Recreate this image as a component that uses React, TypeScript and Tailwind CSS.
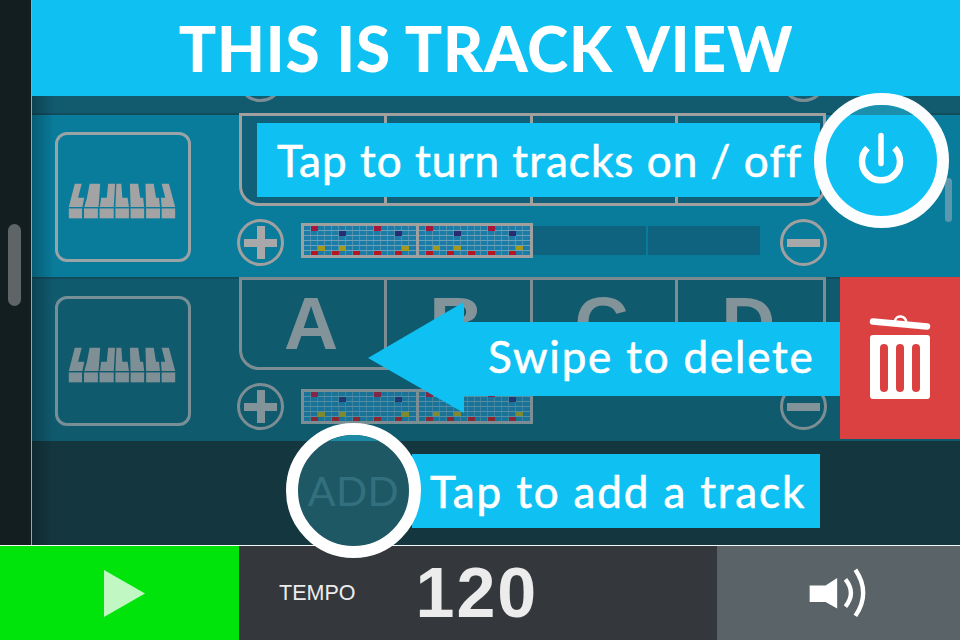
const CY = "bg-[#0fc1f2]";

function Piano() {
  return (
    <svg width="110" height="37" viewBox="203 280 330 112" className="fill-[#a3a3a3] mt-[9px] mr-[2px]">
      <polygon points="225,282 246,282 235,325 254,325 248,353 207,353" />
      <polygon points="270,282 302,282 297,353 254,353 262,325" />
      <polygon points="326,282 347,282 343,353 301,353 305,325 322,325" />
      <polygon points="351,282 366,282 369,325 385,325 389,353 348,353" />
      <polygon points="392,282 417,282 423,325 432,325 435,353 394,353" />
      <polygon points="439,282 464,282 471,325 480,325 483,353 441,353" />
      <polygon points="488,282 510,282 529,353 488,353 486,325 499,325" />
      {[207, 253, 300, 348, 394, 441, 488].map((x, i) => (
        <rect key={i} x={x} y="357" width={[40, 42, 43, 41, 41, 42, 41][i]} height="30" />
      ))}
    </svg>
  );
}

function Pattern({ w }: { w: number }) {
  const notes = [
    [1, 0, "#a8163a"], [10, 0, "#a8163a"], [5, 1, "#2a2c72"], [13, 1, "#2a2c72"],
    [2, 4, "#a39a1c"], [5, 4, "#a39a1c"], [14, 4, "#a39a1c"],
    [1, 5, "#b5161f"], [4, 5, "#b5161f"], [7, 5, "#b5161f"], [10, 5, "#b5161f"], [13, 5, "#b5161f"],
  ] as const;
  return (
    <svg width={w} height="29" viewBox="0 0 112 29" className="block" shapeRendering="crispEdges">
      <rect width="112" height="29" fill="#1c7ca8" />
      {Array.from({ length: 15 }, (_, i) => (
        <rect key={i} x={(i + 1) * 7 - 1} y="0" width="1" height="29" fill="#4f90ac" />
      ))}
      {[4, 9, 14, 19, 24].map((y) => (
        <rect key={y} x="0" y={y} width="112" height="1" fill="#6aa0b8" />
      ))}
      {notes.map(([c, r, f], i) => (
        <rect key={i} x={c * 7} y={r * 5 - (r === 0 ? 0 : 0)} width="7" height="4.5" fill={f} />
      ))}
    </svg>
  );
}

function RoundBtn({ plus }: { plus?: boolean }) {
  return (
    <div className="relative w-[47px] h-[47px] rounded-full border-[3px] border-[#a0a0a0] shrink-0 flex items-center justify-center">
      <div className="w-[33px] h-[8px] bg-[#a8a8a8]" />
      {plus && <div className="absolute w-[8px] h-[33px] bg-[#a8a8a8]" />}
    </div>
  );
}

function Letter({ c, last }: { c: string; last?: boolean }) {
  return (
    <div className={`h-[87px] overflow-hidden flex items-center justify-center pr-[4px] leading-none ${last ? "" : "border-r-[3px] border-[#a0a0a0]"}`}>
      {c}
    </div>
  );
}

function Track({ bg, dim, seqClass, hideIcon }: { bg: string; dim?: boolean; seqClass: string; hideIcon?: boolean }) {
  return (
    <div className={`h-[164px] shrink-0 border-t-2 border-[#134b5b] ${bg}`}>
      <div className={`flex h-full ${dim ? "opacity-75" : ""}`}>
        <div className={`w-[136px] h-[130px] mt-[17px] ml-[23px] shrink-0 rounded-xl border-[3px] border-[#9aa3a5] flex items-center justify-center ${hideIcon ? "invisible" : ""}`}>
          <Piano />
        </div>
        <div className="ml-[48px] w-[587px] -mt-[2px] flex flex-col">
          <div className={`h-[93px] w-[587px] rounded-b-[20px] border-[3px] border-[#a0a0a0] ${dim ? "" : "bg-[#10607a]"} grid grid-cols-4 font-['Liberation_Sans',sans-serif] font-bold text-[75px] text-[#a8a8a8]`}>
            <Letter c="A" />
            <Letter c="B" />
            <Letter c="C" />
            <Letter c="D" last />
          </div>
          <div className="flex items-center mt-[13px] -ml-[2px]">
            <RoundBtn plus />
            <div className={`ml-[17px] flex items-center w-[460px] ${seqClass}`}>
              <div className="flex gap-[3px] border-[3px] border-[#a0a0a0] bg-[#a0a0a0] shrink-0">
                <Pattern w={112} />
                <Pattern w={111} />
              </div>
              <div className={`w-[113px] h-[29px] bg-[#0f637f] shrink-0 ${dim ? "invisible" : ""}`} />
              <div className={`w-[112px] h-[29px] bg-[#0f637f] shrink-0 ml-[2px] ${dim ? "invisible" : ""}`} />
            </div>
            <div className="ml-[20px]"><RoundBtn /></div>
          </div>
        </div>
      </div>
    </div>
  );
}

export default function App() {
  const note = "font-['Lato',sans-serif] [-webkit-text-stroke:0.6px_white] text-white text-[44px]";
  return (
    <div className="relative w-[960px] h-[640px] overflow-hidden flex flex-col bg-[#14373f] font-['Lato',sans-serif]">
      <div className="h-[545px] flex shrink-0">
        <div className="w-[31px] shrink-0 bg-[#121e20] flex items-center pb-[1px]">
          <div className="ml-[8px] w-[13px] h-[82px] mt-[-14px] rounded-full bg-[#5f6567]" />
        </div>
        <div className="relative w-[929px] border-l border-[#9aa5a5] flex flex-col">
          <div className={`h-[96px] shrink-0 ${CY} font-['Lato',sans-serif] text-white flex items-center justify-center pr-[20px] font-black tracking-[0.9px] text-[62px] leading-none`}>
            THIS IS TRACK VIEW
          </div>
          <div className="h-[17px] shrink-0 overflow-hidden flex flex-col justify-end bg-[#125a6e]">
            <Track bg="bg-[#125a6e]" dim hideIcon seqClass="-mt-[4px]" />
          </div>
          <Track bg="bg-[#097b9b]" seqClass="-mt-[4px]" />
          <Track bg="bg-[#105a6e]" dim seqClass="mt-0" />
          <div className="flex-1 bg-[#14373f]" />
          <div className="absolute left-0 top-[96px] bottom-0 w-[22px] bg-gradient-to-r from-black/25 to-transparent" />
        </div>
      </div>

      <div className="h-[95px] border-t border-[#f2f7f5] flex shrink-0">
        <div className="w-[239px] bg-[#00e40b] flex items-center justify-center pl-[10px]">
          <svg width="41" height="47" viewBox="0 0 41 47"><polygon points="0,0 41,23.5 0,47" fill="#c0f7c3" /></svg>
        </div>
        <div className="w-[478px] bg-[#34383d] flex items-center font-['Liberation_Sans',sans-serif] text-[#ececec]">
          <span className="ml-[40px] text-[21.5px]">TEMPO</span>
          <span className="ml-[60px] font-bold text-[70px] tracking-[2px] leading-none">120</span>
        </div>
        <div className="flex-1 bg-[#5a6468] flex items-center justify-center pr-[1px]">
          <svg width="58" height="50" viewBox="325 88 175 150" fill="#fff">
            <polygon points="327,140 375,140 410,118 410,210 375,190 327,190" />
            <path d="M435 122 Q468 163 435 204" fill="none" stroke="#fff" strokeWidth="13" />
            <path d="M465 93 Q512 163 465 232" fill="none" stroke="#fff" strokeWidth="13" />
          </svg>
        </div>
      </div>

      {/* overlays */}
      <div className="absolute left-[945px] top-[178px] w-[7px] h-[44px] rounded-full bg-[#5b98ad]" />

      <div className="absolute left-[840px] top-[277px] w-[120px] h-[162px] bg-[#dc4141] flex items-center justify-center">
        <svg width="62" height="86" viewBox="869 315 62 86" fill="#fff">
          <rect x="870" y="335" width="60" height="64" rx="3" />
          <rect x="880" y="344" width="8" height="48" rx="4" fill="#dc4141" />
          <rect x="896" y="344" width="8" height="48" rx="4" fill="#dc4141" />
          <rect x="912" y="344" width="8" height="48" rx="4" fill="#dc4141" />
          <line x1="873" y1="321.5" x2="927" y2="326.5" stroke="#fff" strokeWidth="6.5" strokeLinecap="round" />
          <path d="M895 321 a5.5 5 0 0 1 11 1" fill="none" stroke="#fff" strokeWidth="2.5" />
        </svg>
      </div>

      <div className={`absolute left-[257px] top-[123px] w-[563px] h-[74px] ${CY} ${note} tracking-[1.05px] pl-[20px] pb-[1px] flex items-center`}>
        Tap to turn tracks on / off
      </div>
      <div className="absolute left-[814px] top-[93px] w-[135px] h-[135px] rounded-full border-[12px] border-[#fbfdfe] bg-[#0fc1f2] overflow-hidden flex items-center justify-center">
        <div className="absolute top-0 left-0 right-0 h-[10px] bg-[#1c8fac]" />
        <svg width="46" height="60" viewBox="0 0 46 60" fill="none" stroke="#fff" strokeWidth="6.5" strokeLinecap="round" className="mr-[2px]">
          <path d="M9.5 17 A19 19 0 1 0 36.5 17" strokeLinecap="butt" />
          <line x1="23" y1="4.5" x2="23" y2="32.5" strokeWidth="5.5" />
        </svg>
      </div>

      <div className="absolute left-[368px] top-[302px] w-[472px] h-[111px] flex items-center">
        <svg width="96" height="111" viewBox="0 0 96 111" className="shrink-0"><polygon points="0,56 96,0 96,111" fill="#0fc1f2" /></svg>
        <div className={`flex-1 h-[74px] mt-[3px] ${CY} ${note} tracking-[1.8px] pl-[24px] pb-[6px] flex items-center`}>Swipe to delete</div>
      </div>

      <div className={`absolute left-[412px] top-[454px] w-[408px] h-[74px] ${CY} ${note} tracking-[1.85px] pl-[18px] flex items-center`}>
        Tap to add a track
      </div>
      <div className="absolute left-[286px] top-[423px] w-[135px] h-[135px] rounded-full border-[12px] border-white bg-[#1d5864] overflow-hidden flex items-center justify-center">
        <div className="absolute top-0 left-0 right-0 h-[6px] bg-[#1c8aa5]" />
        <span className="text-[41px] tracking-[0.5px] text-[#33707f]">ADD</span>
      </div>
    </div>
  );
}
